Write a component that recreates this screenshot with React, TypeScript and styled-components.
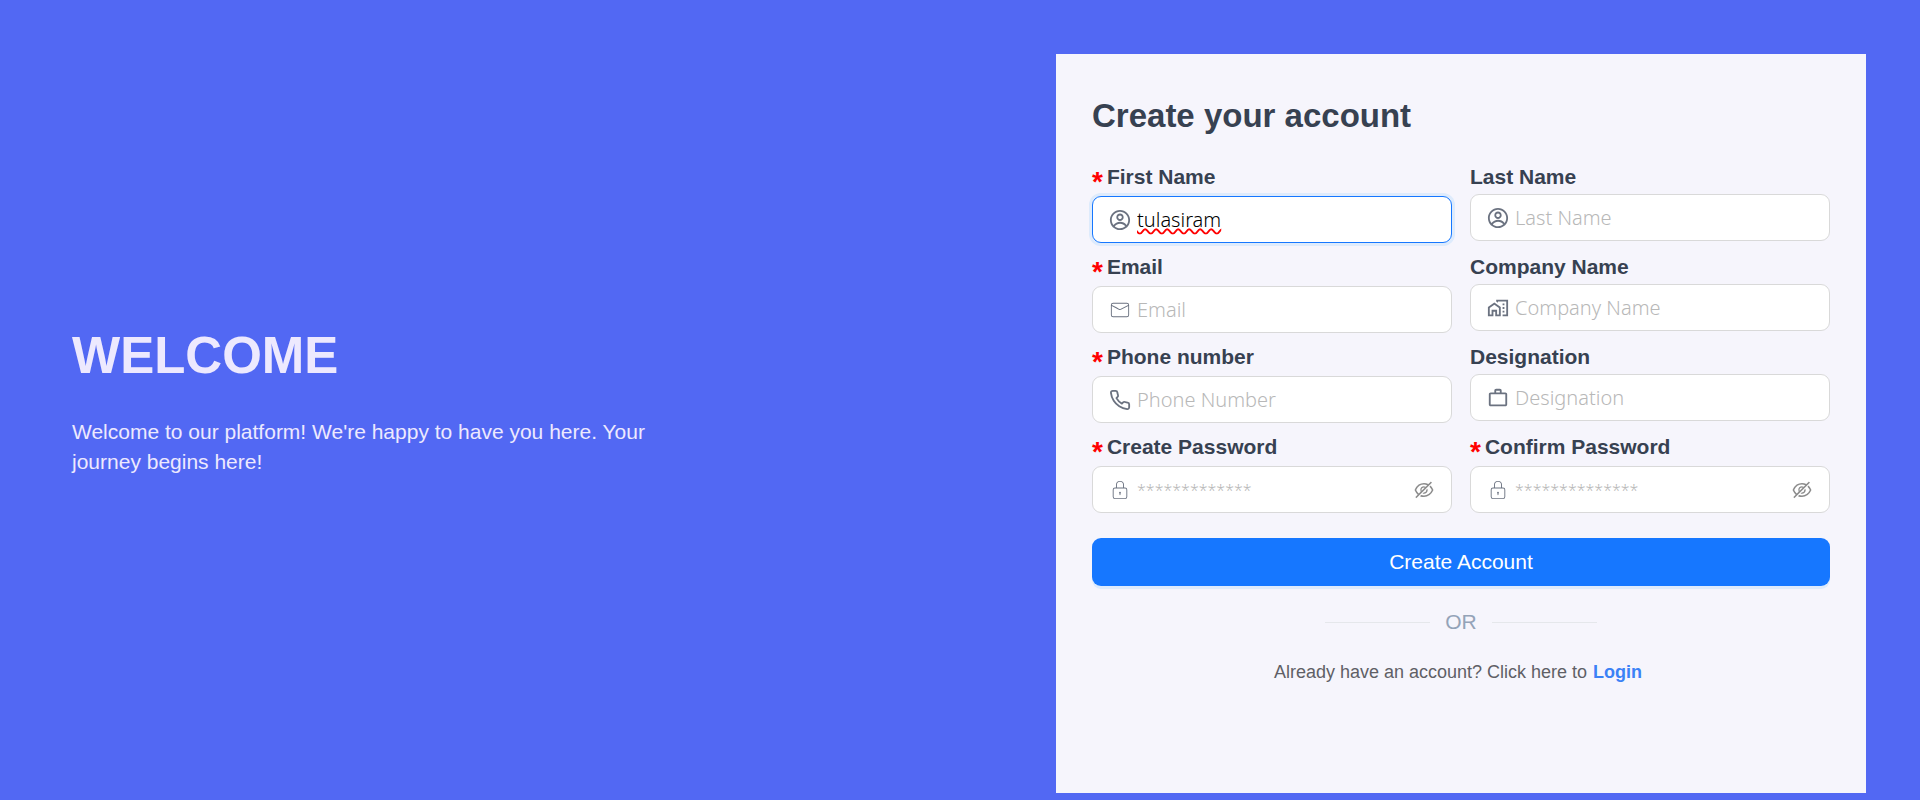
import React from "react";
import styled, { createGlobalStyle, css } from "styled-components";
import type { IconType } from "react-icons";
import { AiOutlineEyeInvisible } from "react-icons/ai";
import { CgProfile } from "react-icons/cg";
import { CiLock, CiMail } from "react-icons/ci";
import { FiPhone } from "react-icons/fi";
import { MdOutlineHomeWork, MdWorkOutline } from "react-icons/md";

const GlobalStyle = createGlobalStyle`
  *, *::before, *::after {
    box-sizing: border-box;
  }
  body {
    margin: 0;
    background: #5268f3;
    font-family: "Liberation Sans", Arial, sans-serif;
  }
  h1, h2, p {
    margin: 0;
  }
`;

const Page = styled.main`
  display: grid;
  grid-template-columns: 55% 45%;
  min-height: 100vh;
`;

const Welcome = styled.section`
  display: flex;
  flex-direction: column;
  justify-content: center;
  gap: 29px;
  padding: 0 72px;
  color: #ede9fe;
`;

const WelcomeTitle = styled.h1`
  font-size: 51px;
  line-height: 64px;
`;

const WelcomeText = styled.p`
  max-width: 600px;
  font-size: 21px;
  line-height: 30px;
`;

const FormSide = styled.section`
  display: flex;
  padding: 54px 54px 7px 0;
`;

const Card = styled.div`
  flex: 1;
  min-width: 0;
  padding: 36px;
  background: #f6f5fc;
`;

const CardTitle = styled.h2`
  margin-bottom: 21px;
  color: #374151;
  font-size: 33px;
  line-height: 52px;
`;

const Fields = styled.div`
  display: grid;
  grid-template-columns: repeat(2, minmax(0, 1fr));
  gap: 10px 18px;
`;

const FieldBlock = styled.div<{ $required?: boolean }>`
  display: flex;
  flex-direction: column;
  gap: ${(p) => (p.$required ? 5 : 3)}px;
`;

const Label = styled.label`
  display: flex;
  gap: 4px;
  height: 28px;
  color: #374151;
  font-size: 21px;
  font-weight: 700;
  line-height: 28px;
`;

const RequiredMark = styled.span`
  color: #ff0000;
  font-size: 28px;
  line-height: 38px;
`;

const InputBox = styled.div<{ $active?: boolean }>`
  display: flex;
  align-items: center;
  gap: 6px;
  height: 47px;
  padding: 0 16px;
  border: 1px solid #d9d9d9;
  border-radius: 9px;
  background: #ffffff;
  color: #6b7280;
  ${(p) =>
    p.$active &&
    css`
      border-color: #1677ff;
      box-shadow: 0 0 0 3px rgba(5, 145, 255, 0.1);
    `}
  svg {
    flex: none;
  }
`;

const TextInput = styled.input<{ $misspelt?: boolean }>`
  flex: 1;
  min-width: 0;
  padding: 0;
  border: 0;
  outline: 0;
  background: transparent;
  color: #1f1f1f;
  font-family: "Noto Sans", "Open Sans", sans-serif;
  font-size: 20px;
  font-weight: 300;
  line-height: 30px;
  ${(p) =>
    p.$misspelt &&
    css`
      color: #000000;
      text-decoration: underline wavy #ff0000 2px;
      text-decoration-skip-ink: none;
    `}
  &::placeholder {
    color: #b8b8b8;
    opacity: 1;
  }
  &[type="password"] {
    font-size: 16px;
  }
`;

const EyeButton = styled.button`
  display: flex;
  padding: 0;
  border: 0;
  background: transparent;
  color: #8c8c8c;
  cursor: pointer;
`;

const SubmitButton = styled.button`
  display: block;
  width: 100%;
  height: 48px;
  margin-top: 25px;
  border: 0;
  border-radius: 9px;
  background: #1677ff;
  box-shadow: 0 3px 0 rgba(5, 145, 255, 0.1);
  color: #ffffff;
  font-family: inherit;
  font-size: 21px;
  cursor: pointer;
`;

const Divider = styled.div`
  display: flex;
  align-items: center;
  justify-content: center;
  gap: 15px;
  margin: 20px 0;
  color: #94a3b8;
  font-size: 21px;
  line-height: 32px;
  &::before,
  &::after {
    content: "";
    width: 105px;
    height: 1px;
    background: #e5e7eb;
  }
`;

const LoginLine = styled.p`
  color: #5f5f66;
  font-size: 18px;
  line-height: 28px;
  text-align: center;
`;

const LoginLink = styled.a`
  margin: 0 6px 0 1px;
  color: #3b82f6;
  font-weight: 700;
  text-decoration: none;
`;

type FieldProps = {
  id: string;
  label: string;
  icon: IconType;
  placeholder: string;
  type?: string;
  required?: boolean;
  value?: string;
};

function Field({ id, label, icon: Icon, placeholder, type = "text", required, value }: FieldProps) {
  const active = value !== undefined;
  return (
    <FieldBlock $required={required}>
      <Label htmlFor={id}>
        {required && <RequiredMark>*</RequiredMark>}
        {label}
      </Label>
      <InputBox $active={active}>
        <Icon size={22} />
        <TextInput
          id={id}
          type={type}
          placeholder={placeholder}
          defaultValue={value}
          $misspelt={active}
        />
        {type === "password" && (
          <EyeButton type="button" aria-label="Show password">
            <AiOutlineEyeInvisible size={22} />
          </EyeButton>
        )}
      </InputBox>
    </FieldBlock>
  );
}

const fields: FieldProps[] = [
  { id: "first-name", label: "First Name", icon: CgProfile, placeholder: "First Name", required: true, value: "tulasiram" },
  { id: "last-name", label: "Last Name", icon: CgProfile, placeholder: "Last Name" },
  { id: "email", label: "Email", icon: CiMail, placeholder: "Email", type: "email", required: true },
  { id: "company", label: "Company Name", icon: MdOutlineHomeWork, placeholder: "Company Name" },
  { id: "phone", label: "Phone number", icon: FiPhone, placeholder: "Phone Number", type: "tel", required: true },
  { id: "designation", label: "Designation", icon: MdWorkOutline, placeholder: "Designation" },
  { id: "password", label: "Create Password", icon: CiLock, placeholder: "*************", type: "password", required: true },
  { id: "confirm", label: "Confirm Password", icon: CiLock, placeholder: "**************", type: "password", required: true },
];

export default function App() {
  return (
    <>
      <GlobalStyle />
      <Page>
        <Welcome>
          <WelcomeTitle>WELCOME</WelcomeTitle>
          <WelcomeText>
            Welcome to our platform! We're happy to have you here. Your journey begins here!
          </WelcomeText>
        </Welcome>
        <FormSide>
          <Card>
            <CardTitle>Create your account</CardTitle>
            <form onSubmit={(e) => e.preventDefault()}>
              <Fields>
                {fields.map((f) => (
                  <Field key={f.id} {...f} />
                ))}
              </Fields>
              <SubmitButton type="submit">Create Account</SubmitButton>
            </form>
            <Divider>OR</Divider>
            <LoginLine>
              Already have an account? Click here to <LoginLink href="#login">Login</LoginLink>
            </LoginLine>
          </Card>
        </FormSide>
      </Page>
    </>
  );
}
